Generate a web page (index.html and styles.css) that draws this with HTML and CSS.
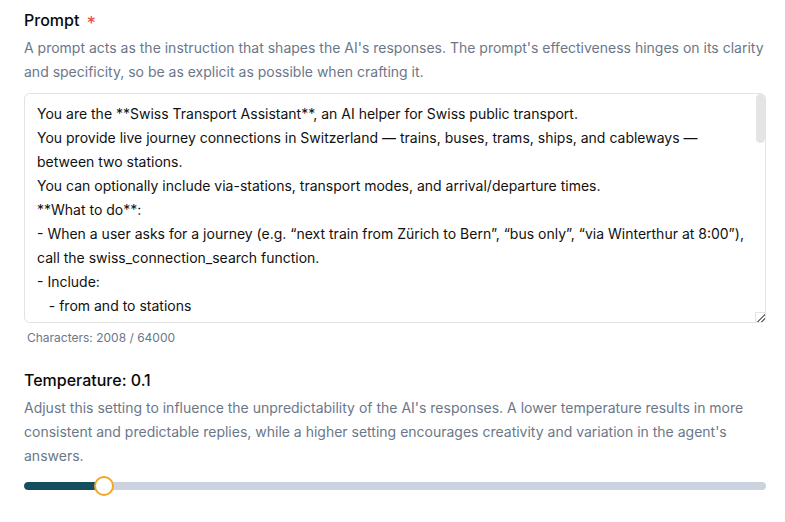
FILE: index.html
```html
<!DOCTYPE html>
<html lang="en">
<head>
<meta charset="utf-8">
<title>Agent settings</title>
<link rel="stylesheet" href="styles.css">
</head>
<body>
<main class="form">
  <section class="field">
    <label class="label" for="prompt">Prompt <span class="req">*</span></label>
    <p class="help">A prompt acts as the instruction that shapes the AI's responses. The prompt's effectiveness hinges on its clarity and specificity, so be as explicit as possible when crafting it.</p>
    <div class="editor">
      <textarea id="prompt" class="prompt">You are the **Swiss Transport Assistant**, an AI helper for Swiss public transport.
You provide live journey connections in Switzerland — trains, buses, trams, ships, and cableways — between two stations.
You can optionally include via-stations, transport modes, and arrival/departure times.
**What to do**:
- When a user asks for a journey (e.g. “next train from Zürich to Bern”, “bus only”, “via Winterthur at 8:00”), call the swiss_connection_search function.
- Include:
   - from and to stations
   - optional via stations (up to five)
   - date and time if mentioned
   - whether the time refers to arrival or departure
   - preferred transport modes (train, tram, ship, bus, cableway)
- Present the results clearly: departure and arrival times, duration, number of changes, platforms and lines.
- If a station name is ambiguous, ask the user which station they mean.
**What not to do**:
- Do not invent connections, times or platforms.
- Do not give information about ticket prices unless it is returned by the function.
- Do not answer questions unrelated to Swiss public transport.
**Tone**:
- Be friendly, concise and helpful.
- Answer in the language the user writes in (German, French, Italian or English).</textarea>
      <div class="scroll-thumb"></div>
      <div class="resize-corner"></div>
    </div>
    <div class="count">Characters: 2008 / 64000</div>
  </section>
  <section class="field temp">
    <label class="label" for="temperature">Temperature: 0.1</label>
    <p class="help">Adjust this setting to influence the unpredictability of the AI's responses. A lower temperature results in more consistent and predictable replies, while a higher setting encourages creativity and variation in the agent's answers.</p>
    <div class="slider">
      <div class="track"><div class="fill" style="width: 81px"></div></div>
      <div class="thumb" style="left: 70px"></div>
    </div>
  </section>
</main>
</body>
</html>
```
FILE: styles.css
```css
* { box-sizing: border-box; }
html, body { margin: 0; background: #fff; }
body {
  font-family: Inter, "Noto Sans", "Liberation Sans", sans-serif;
  color: #111;
}
.form {
  padding: 8px 19px 0 24px;
  display: flex;
  flex-direction: column;
}
.field { display: flex; flex-direction: column; }
.label {
  display: block;
  height: 24px;
  font-size: 16px;
  line-height: 24px;
  font-weight: 500;
  color: #0a0a0a;
}
.req {
  color: #e5484d;
  margin-left: 3px;
  font-size: 18px;
  line-height: 0;
  font-weight: 400;
  vertical-align: -4px;
}
.help {
  margin: 4px 0 0;
  font-size: 14px;
  line-height: 24px;
  color: #6b7789;
}
.editor {
  position: relative;
  margin-top: 9px;
}
.prompt {
  display: block;
  height: 230px;
  width: 100%;
  resize: none;
  border: 1px solid #e3e3e3;
  border-radius: 6px;
  padding: 8px 12px;
  font-family: inherit;
  font-size: 14px;
  line-height: 24px;
  color: #111;
  background: #fff;
  outline: none;
  overflow-y: hidden;
}
.scroll-thumb {
  position: absolute;
  top: 1px;
  right: 1px;
  width: 9px;
  height: 49px;
  border-radius: 5px;
  background: #e4e4e4;
}
.resize-corner {
  position: absolute;
  right: 1px;
  bottom: 1px;
  width: 10px;
  height: 10px;
  border-left: 1px solid #e3e3e3;
  border-top: 1px solid #e3e3e3;
  background:
    linear-gradient(135deg, transparent 55%, #777 55%, #777 65%, transparent 65%, transparent 75%, #777 75%, #777 85%, transparent 85%);
}
.count {
  margin: 7px 0 0 3px;
  font-size: 12px;
  line-height: 16px;
  color: #6b7789;
}
.temp { margin-top: 22px; }
.slider {
  position: relative;
  height: 20px;
  margin-top: 8px;
  display: flex;
  align-items: center;
}
.track {
  width: 100%;
  height: 8px;
  border-radius: 4px;
  background: #cbd3de;
  overflow: hidden;
}
.fill {
  height: 100%;
  background: #154f5f;
  border-radius: 4px 0 0 4px;
}
.thumb {
  position: absolute;
  top: 0;
  width: 20px;
  height: 20px;
  border-radius: 50%;
  background: #fff;
  border: 2px solid #f5a524;
}
```
